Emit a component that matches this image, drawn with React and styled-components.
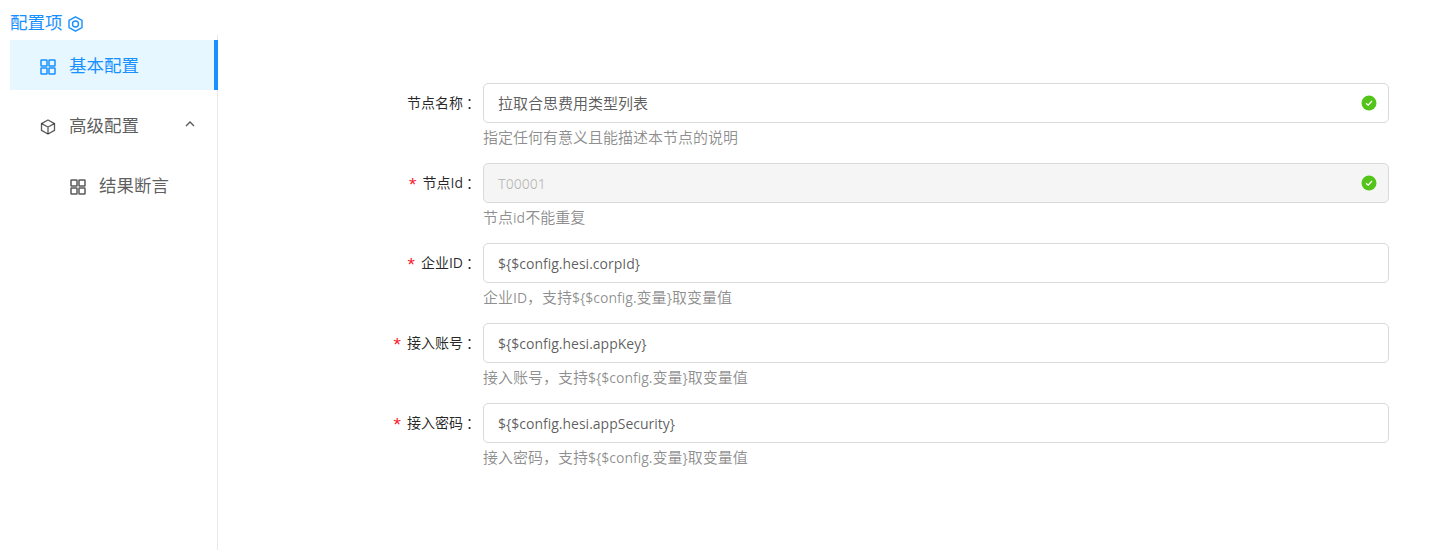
import React from 'react';
import styled, { createGlobalStyle } from 'styled-components';

const Global = createGlobalStyle`
  html, body { margin: 0; padding: 0; background: #fff; }
  body { font-family: "Open Sans", "Noto Sans CJK SC", sans-serif; font-size: 14px; }
`;

const Page = styled.div`
  display: flex;
  width: 1438px;
  height: 550px;
  overflow: hidden;
`;

const Sidebar = styled.aside`
  width: 218px;
  padding: 12px 0 0 10px;
  box-sizing: border-box;
  flex: none;
`;

const Title = styled.div`
  display: flex;
  align-items: center;
  gap: 5px;
  height: 21px;
  margin-bottom: 2px;
  color: #1890ff;
  font-size: 17.5px;
  line-height: 21px;
`;

const TitleIcon = styled.span`
  display: inline-flex;
  margin-top: 3px;
`;

const Menu = styled.nav`
  display: flex;
  flex-direction: column;
  gap: 10px;
  height: 515px;
  padding-top: 5px;
  box-sizing: border-box;
  border-right: 1px solid #e8e8e8;
`;

const Item = styled.div`
  position: relative;
  display: flex;
  align-items: center;
  height: 50px;
  box-sizing: border-box;
  padding: 0 0 2px ${p => p.$indent}px;
  margin-right: ${p => (p.$active ? '-1px' : '0')};
  background: ${p => (p.$active ? '#e6f7ff' : 'transparent')};
  color: ${p => (p.$active ? '#1890ff' : 'rgba(0,0,0,0.65)')};
  font-size: 17.5px;
  border-right: ${p => (p.$active ? '4px solid #1890ff' : '0')};
`;

const ItemIcon = styled.span`
  display: inline-flex;
  width: 16px;
  height: 16px;
  margin-right: 13px;
  position: relative;
  top: 3px;
`;

const Chevron = styled.span`
  display: inline-flex;
  position: absolute;
  right: 22px;
  top: 20px;
  color: rgba(0,0,0,0.65);
`;

const Main = styled.main`
  flex: 1;
  padding: 83px 0 0 0;
  box-sizing: border-box;
`;

const Row = styled.div`
  display: flex;
  height: 80px;
`;

const Label = styled.label`
  width: 262px;
  margin-right: 3px;
  height: 40px;
  flex: none;
  display: flex;
  justify-content: flex-end;
  align-items: center;
  color: rgba(0,0,0,0.85);
  font-size: 14px;
  position: relative;
  top: -1px;
`;

const Star = styled.span`
  color: #f5222d;
  font-family: "Liberation Mono", monospace;
  font-size: 19px;
  line-height: 1;
  margin-right: 4px;
  position: relative;
  top: 4px;
`;

const Colon = styled.span`
  margin-left: 3px;
`;

const Field = styled.div`
  width: 906px;
  flex: none;
`;

const InputWrap = styled.div`
  position: relative;
  height: 40px;
`;

const Input = styled.input`
  width: 100%;
  height: 40px;
  box-sizing: border-box;
  padding: 0 14px ${p => (p.$cjk ? '2px' : '0')};
  border: 1px solid #d9d9d9;
  border-radius: 5px;
  font: inherit;
  font-size: ${p => (p.$cjk ? '15px' : '14px')};
  color: rgba(0,0,0,0.65);
  background: #fff;
  outline: none;
  &:disabled {
    background: #f5f5f5;
    color: rgba(0,0,0,0.25);
  }
`;

const Check = styled.span`
  position: absolute;
  right: 12px;
  top: 12px;
  width: 16px;
  height: 16px;
  display: flex;
`;

const Help = styled.div`
  margin-top: 4px;
  font-size: 15px;
  line-height: 20px;
  color: rgba(0,0,0,0.45);
`;

const Latin = styled.span`
  font-size: 14px;
`;

const GridIcon = () => (
  <svg width="16" height="16" viewBox="0 0 16 16" fill="none" stroke="currentColor" strokeWidth="1.5">
    <rect x="1" y="1" width="6" height="6" rx="0.6" />
    <rect x="9" y="1" width="6" height="6" rx="0.6" />
    <rect x="1" y="9" width="6" height="6" rx="0.6" />
    <rect x="9" y="9" width="6" height="6" rx="0.6" />
  </svg>
);

const BoxIcon = () => (
  <svg width="16" height="16" viewBox="0 0 16 16" fill="none" stroke="currentColor" strokeWidth="1.3" strokeLinejoin="round">
    <path d="M8 1 14.5 4.6v6.8L8 15 1.5 11.4V4.6z" />
    <path d="M1.5 4.6 8 8l6.5-3.4M8 8v7" />
  </svg>
);

const HexIcon = () => (
  <svg width="15" height="16" viewBox="0 0 15 16" fill="none" stroke="#1890ff" strokeWidth="1.4" strokeLinejoin="round">
    <path d="M7.5 .8 14 4.4v7.2L7.5 15.2 1 11.6V4.4z" />
    <circle cx="7.5" cy="8" r="3" />
  </svg>
);

const ChevronIcon = () => (
  <svg width="10" height="8" viewBox="0 0 10 8" fill="none" stroke="currentColor" strokeWidth="1.4">
    <path d="M1 6 5 2l4 4" />
  </svg>
);

const CheckIcon = () => (
  <svg width="16" height="16" viewBox="0 0 16 16">
    <circle cx="8" cy="8" r="7.5" fill="#52c41a" />
    <path d="M5 8.2 7.2 10.2 11 6" fill="none" stroke="#fff" strokeWidth="1.3" />
  </svg>
);

const Mixed = ({ text }) =>
  text.split(/([\x00-\x7f]+)/).map((part, i) =>
    i % 2 ? <Latin key={i}>{part}</Latin> : part
  );

const fields = [
  { label: '节点名称', value: '拉取合思费用类型列表', cjk: true, help: '指定任何有意义且能描述本节点的说明', ok: true },
  { label: '节点Id', value: 'T00001', help: '节点id不能重复', required: true, disabled: true, ok: true },
  { label: '企业ID', value: '${$config.hesi.corpId}', help: '企业ID，支持${$config.变量}取变量值', required: true },
  { label: '接入账号', value: '${$config.hesi.appKey}', help: '接入账号，支持${$config.变量}取变量值', required: true },
  { label: '接入密码', value: '${$config.hesi.appSecurity}', help: '接入密码，支持${$config.变量}取变量值', required: true },
];

export default function App() {
  return (
    <Page>
      <Global />
      <Sidebar>
        <Title>配置项 <TitleIcon><HexIcon /></TitleIcon></Title>
        <Menu>
          <Item $indent={30} $active>
            <ItemIcon><GridIcon /></ItemIcon>基本配置
          </Item>
          <Item $indent={30}>
            <ItemIcon><BoxIcon /></ItemIcon>高级配置
            <Chevron><ChevronIcon /></Chevron>
          </Item>
          <Item $indent={60}>
            <ItemIcon><GridIcon /></ItemIcon>结果断言
          </Item>
        </Menu>
      </Sidebar>
      <Main>
        {fields.map(f => (
          <Row key={f.label}>
            <Label>
              {f.required && <Star>*</Star>}
              {f.label}<Colon>：</Colon>
            </Label>
            <Field>
              <InputWrap>
                <Input readOnly value={f.value} disabled={f.disabled} $cjk={f.cjk} />
                {f.ok && <Check><CheckIcon /></Check>}
              </InputWrap>
              <Help><Mixed text={f.help} /></Help>
            </Field>
          </Row>
        ))}
      </Main>
    </Page>
  );
}
